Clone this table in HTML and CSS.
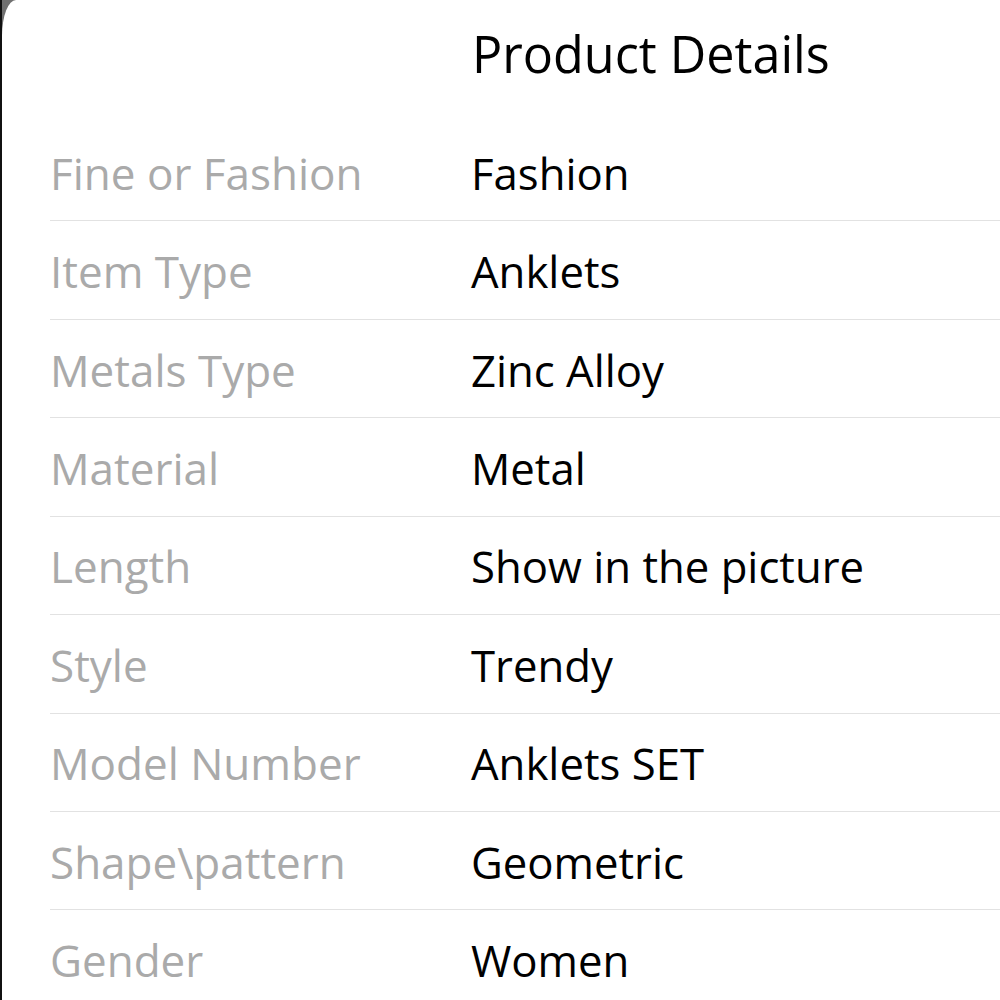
FILE: index.html
```html
<!DOCTYPE html>
<html>
<head>
<meta charset="utf-8">
<link rel="stylesheet" href="styles.css">
</head>
<body>
<div class="frame">
  <div class="card">
    <div class="title-row">
      <div></div>
      <h1 class="title">Product Details</h1>
    </div>
    <div class="rows">
      <div class="row"><div class="label">Fine or Fashion</div><div class="value">Fashion</div></div>
      <div class="row"><div class="label">Item Type</div><div class="value">Anklets</div></div>
      <div class="row"><div class="label">Metals Type</div><div class="value">Zinc Alloy</div></div>
      <div class="row"><div class="label">Material</div><div class="value">Metal</div></div>
      <div class="row"><div class="label">Length</div><div class="value">Show in the picture</div></div>
      <div class="row"><div class="label">Style</div><div class="value">Trendy</div></div>
      <div class="row"><div class="label">Model Number</div><div class="value">Anklets SET</div></div>
      <div class="row"><div class="label">Shape\pattern</div><div class="value">Geometric</div></div>
      <div class="row"><div class="label">Gender</div><div class="value">Women</div></div>
    </div>
  </div>
</div>
</body>
</html>
```
FILE: styles.css
```css
html, body {
  margin: 0;
  padding: 0;
  width: 1000px;
  height: 1000px;
  overflow: hidden;
}
body {
  font-family: "Open Sans", "Liberation Sans", sans-serif;
}
.frame {
  height: 1000px;
  border-left: 2px solid #111;
  background: #707070;
}
.card {
  height: 1000px;
  background: #fff;
  border-top-left-radius: 14px 36px;
  padding-left: 48px;
  box-sizing: border-box;
}
.title-row {
  display: grid;
  grid-template-columns: 422px 1fr;
  height: 123px;
}
.title {
  margin: 0;
  padding-top: 24px;
  font-weight: 400;
  font-size: 50.3px;
  line-height: 60px;
  color: #000;
}
.row {
  display: grid;
  grid-template-columns: 421px 1fr;
  align-items: center;
  height: 98.43px;
  box-sizing: border-box;
  border-bottom: 1px solid #e2e2e2;
}
.label {
  font-size: 44px;
  color: #aaaaaa;
  padding-top: 2px;
}
.value {
  font-size: 43.7px;
  color: #000;
  padding-top: 2px;
}
```
